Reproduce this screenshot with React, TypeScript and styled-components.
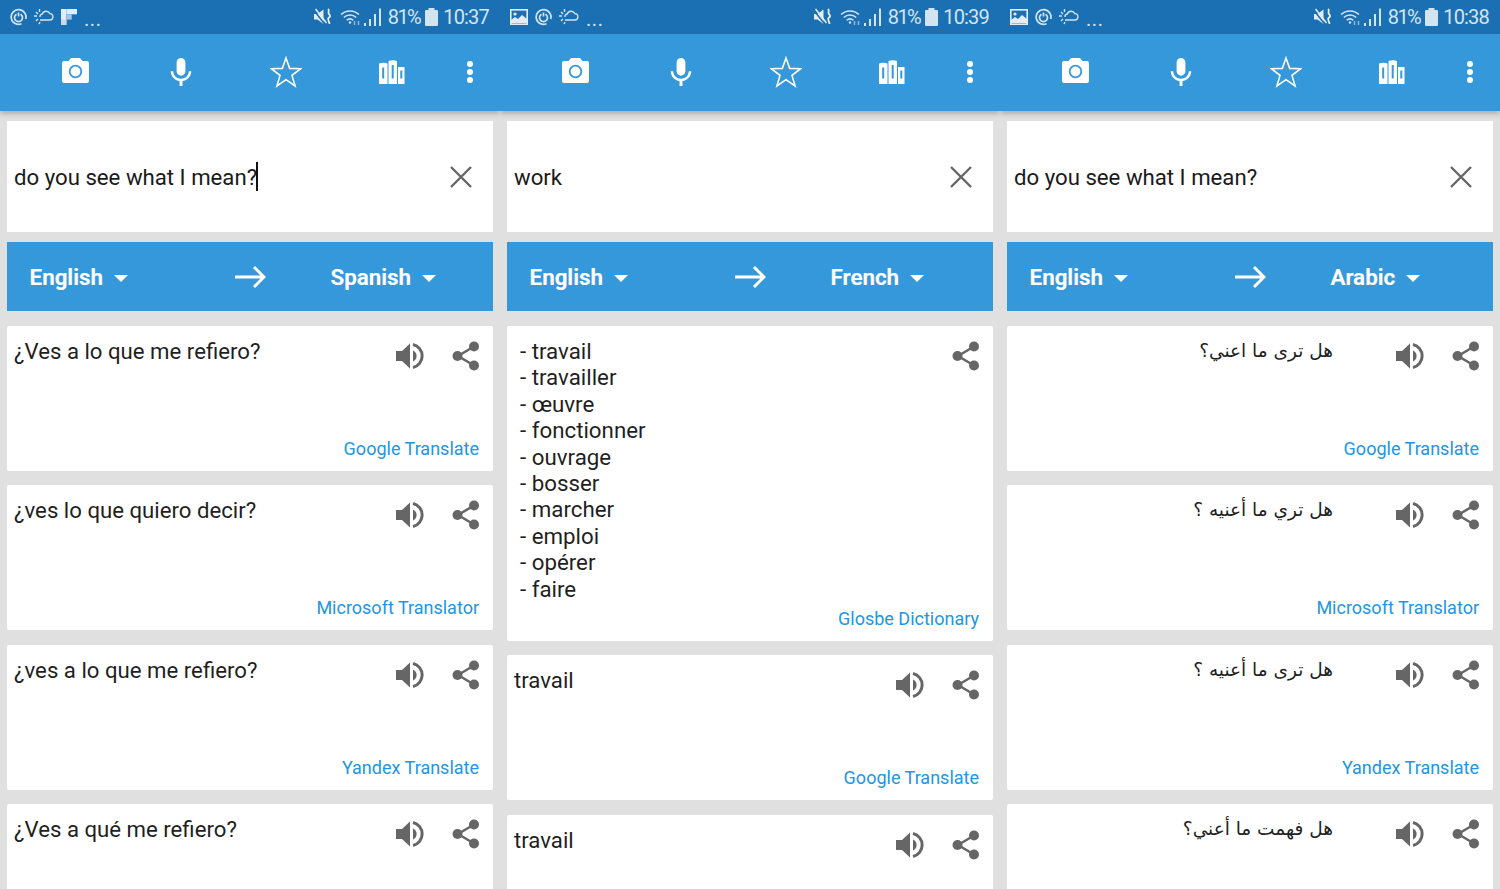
import React from 'react'
import styled, { createGlobalStyle } from 'styled-components'

const GlobalStyle = createGlobalStyle`
  html, body {
    margin: 0;
    padding: 0;
    background: #e0e0e0;
  }
  body {
    font-family: Roboto, "Liberation Sans", sans-serif;
  }
`

const Page = styled.div`
  display: grid;
  grid-template-columns: repeat(3, 500px);
  width: 1500px;
  height: 889px;
  overflow: hidden;
`

const Phone = styled.div`
  display: flex;
  flex-direction: column;
  min-width: 0;
  overflow: hidden;
`

const StatusBar = styled.div`
  display: flex;
  align-items: center;
  justify-content: space-between;
  height: 34px;
  flex: none;
  padding: 0 11px 0 10px;
  background: #1b70b3;
  color: #d3e4f1;
  font-size: 20px;
`

const StatusGroup = styled.div`
  display: flex;
  align-items: center;
  gap: 5px;
`

const LeftGroup = styled(StatusGroup)`
  gap: 7px;
`

const Dots = styled.span`
  font-size: 20px;
  letter-spacing: 0.6px;
  margin-top: 4px;
`

const Percent = styled.span`
  margin-left: 2px;
  letter-spacing: -1.6px;
`

const Clock = styled.span`
  letter-spacing: -0.8px;
`

const Toolbar = styled.div`
  display: flex;
  align-items: center;
  height: 77px;
  flex: none;
  padding-left: 22.5px;
  background: #3498db;
  box-shadow: 0 3px 5px rgba(0, 0, 0, 0.22);
  position: relative;
  z-index: 1;
`

const ToolSlot = styled.div<{ $narrow?: boolean }>`
  display: flex;
  align-items: center;
  justify-content: center;
  width: ${(p) => (p.$narrow ? '50px' : '105.5px')};
  margin-top: -1px;
`

const Content = styled.div`
  display: flex;
  flex-direction: column;
  padding: 10px 7px 0;
`

const InputCard = styled.div`
  display: flex;
  align-items: center;
  justify-content: space-between;
  height: 111px;
  padding: 0 21px 0 7px;
  background: #fff;
`

const InputText = styled.div`
  font-size: 22.2px;
  color: #1a1a1a;
  display: flex;
  align-items: center;
  padding-top: 1px;
`

const Caret = styled.span`
  display: block;
  width: 2px;
  height: 29px;
  margin: -2px 0 0 -1px;
  background: #111;
`

const LangBar = styled.div`
  display: grid;
  grid-template-columns: 228px 95.5px 1fr;
  align-items: center;
  height: 69px;
  margin-top: 10px;
  margin-bottom: 15px;
  background: #3498db;
  color: #fff;
`

const Lang = styled.div<{ $first?: boolean }>`
  display: flex;
  align-items: center;
  gap: 11px;
  padding-left: ${(p) => (p.$first ? '22.5px' : '0')};
  font-size: 22.4px;
  font-weight: 600;
  -webkit-text-stroke: 0.2px #fff;
`

const DownCaret = styled.span`
  display: block;
  width: 0;
  height: 0;
  margin-top: 3px;
  border-left: 7px solid transparent;
  border-right: 7px solid transparent;
  border-top: 7px solid #fff;
`

const Results = styled.div`
  display: flex;
  flex-direction: column;
  gap: 14.33px;
`

const Card = styled.div<{ $tall?: boolean }>`
  display: flex;
  flex-direction: column;
  flex: none;
  height: ${(p) => (p.$tall ? '315px' : '145px')};
  padding: 12px 13px 0 7px;
  box-sizing: border-box;
  background: #fff;
  border-radius: 2px;
`

const CardRow = styled.div`
  display: flex;
  align-items: flex-start;
  justify-content: space-between;
`

const Translation = styled.div<{ $rtl?: boolean }>`
  flex: 1;
  min-width: 0;
  font-size: 22.2px;
  line-height: 26.4px;
  color: #1f1f1f;
  ${(p) =>
    p.$rtl
      ? `
    direction: rtl;
    padding-right: 63px;
    font-family: "DejaVu Sans", sans-serif;
    font-size: 18.5px;
  `
      : ''}
`

const WordList = styled.div`
  flex: 1;
  padding-left: 6px;
  font-size: 22.3px;
  line-height: 26.4px;
  color: #1f1f1f;
`

const Actions = styled.div`
  display: flex;
  align-items: center;
  justify-content: flex-end;
  gap: 26px;
  flex: none;
  margin-top: 3px;
`

const Source = styled.div`
  margin-top: auto;
  padding: 0 1px 10px 0;
  text-align: right;
  font-size: 18px;
  line-height: 24px;
  color: #2196e3;
`

const RingIcon = () => (
  <svg width="17" height="18" viewBox="0 0 17 18" fill="none" stroke="#d3e4f1" strokeWidth="1.700">
    <path d="M11.500 15.800A7.400 7.400 0 1 1 15.700 11" />
    <path d="M6.500 6.200a4 4 0 1 0 4 0" />
    <path d="M8.500 4.500v4" />
  </svg>
)

const CloudIcon = () => (
  <svg width="20" height="16" viewBox="0 0 20 16" fill="none" stroke="#d3e4f1" strokeWidth="1.400">
    <path d="M6 11h9.500a3.200 3.200 0 0 0 .4-6.400A4.200 4.200 0 0 0 8.200 5a2.600 2.600 0 0 0-2.200 3" />
    <path d="M0 7h3M2 3l2 2M5.500 0v3M2 12l2-2M5 15l1-2" />
  </svg>
)

const FlipIcon = () => (
  <svg width="16" height="16" viewBox="0 0 16 16">
    <rect x="0" y="0" width="5.400" height="16" fill="#e4edf5" />
    <rect x="5.400" y="0" width="10.600" height="5.300" fill="#e4edf5" />
    <rect x="5.400" y="5.300" width="5.300" height="5.300" fill="#a9c8e0" />
    <rect x="0" y="10.600" width="5.400" height="5.400" fill="#c5d9ea" />
  </svg>
)

const PictureIcon = () => (
  <svg width="18" height="16" viewBox="0 0 18 16">
    <rect x="0.800" y="0.800" width="16.400" height="14.400" fill="none" stroke="#e4edf5" strokeWidth="1.600" />
    <path d="M1 14V11l4-3 3 2 4-4 5 4v4z" fill="#e4edf5" />
    <circle cx="5" cy="5" r="1.600" fill="#e4edf5" />
  </svg>
)

const MuteIcon = () => (
  <svg width="18" height="18" viewBox="0 0 18 18" fill="#e4edf5">
    <path d="M0 6h3.500L9.500 1.500V16L3.500 11.500H0z" />
    <path d="M0 2.500l11 14" stroke="#1b70b3" strokeWidth="1.500" />
    <path d="M1.500 1l11 14" stroke="#e4edf5" strokeWidth="1.500" />
    <path d="M14 1c2.500 2-1 3 1 5s1 3-.5 4 1 3 1 6" fill="none" stroke="#e4edf5" strokeWidth="1.800" />
  </svg>
)

const WifiIcon = () => (
  <svg
    width="21"
    height="18"
    viewBox="0 0 21 18"
    fill="none"
    stroke="#d3e4f1"
    strokeWidth="1.500"
    style={{ margin: '0 -2px 0 3px' }}
  >
    <path d="M1 6.500a13 13 0 0 1 18 0" />
    <path d="M3.800 9.500a9 9 0 0 1 12.400 0" />
    <path d="M6.700 12.300a5 5 0 0 1 6.600 0" />
    <circle cx="10" cy="14.500" r="1.200" fill="#d3e4f1" stroke="none" />
    <path d="M14.500 17v-4M18.500 13v4" stroke="#8fb6d6" />
  </svg>
)

const SignalIcon = () => (
  <svg width="17" height="19" viewBox="0 0 17 19" fill="#d3e4f1">
    <rect x="0" y="15" width="2" height="3" />
    <rect x="5" y="11" width="2" height="7" />
    <rect x="10" y="6" width="2" height="12" />
    <rect x="15" y="0.500" width="2" height="17.500" />
  </svg>
)

const BatteryIcon = () => (
  <svg width="13" height="19" viewBox="0 0 13 19" fill="#d3e4f1">
    <rect x="3.500" y="0" width="6" height="2.500" />
    <rect x="0" y="2" width="13" height="16" rx="1" />
  </svg>
)

const CameraIcon = () => (
  <svg width="27" height="28" viewBox="0 0 27 28">
    <path
      fill="#fff"
      d="M9 0L6.500 3H2C.9 3 0 3.900 0 5v18c0 1.100.9 2 2 2h23c1.100 0 2-.9 2-2V5c0-1.100-.9-2-2-2h-4.500L18 0z"
    />
    <circle cx="13.500" cy="13.500" r="5.800" fill="none" stroke="#3498db" strokeWidth="1.800" />
  </svg>
)

const MicIcon = () => (
  <svg width="22" height="30" viewBox="4.500 1.500 15 20" fill="#fff">
    <path d="M12 14c1.660 0 2.990-1.340 2.990-3L15 5c0-1.660-1.340-3-3-3S9 3.340 9 5v6c0 1.660 1.340 3 3 3zm5.300-3c0 3-2.540 5.100-5.300 5.100S6.700 14 6.700 11H5c0 3.410 2.720 6.230 6 6.720V21h2v-3.280c3.280-.48 6-3.300 6-6.720h-1.700z" />
  </svg>
)

const StarIcon = () => (
  <svg width="32" height="33" viewBox="0 0 32 33" fill="none" stroke="#fff" strokeWidth="1.600" strokeLinejoin="miter">
    <path d="M16 2l3.700 10.400 11 .3-8.700 6.700 3.100 10.600-9.100-6.300-9.100 6.300 3.100-10.600-8.700-6.700 11-.3z" />
  </svg>
)

const BooksIcon = () => (
  <svg width="26" height="24" viewBox="0 0 26 24" fill="#fff">
    <path
      fillRule="evenodd"
      d="M0 3.500Q4 2 8.500 3.500V24H0zM3.200 7.500v11h2v-11zM9.500 1Q14 -.5 18 1V24H9.500zM12.700 5v13.500h2V5zM19 7h6.500V24H19zM21.300 10.500v8h2v-8z"
    />
  </svg>
)

const MoreIcon = () => (
  <svg width="8" height="24" viewBox="0 0 8 24" fill="#fff">
    <circle cx="4" cy="4" r="3" />
    <circle cx="4" cy="12" r="3" />
    <circle cx="4" cy="20" r="3" />
  </svg>
)

const CloseIcon = () => (
  <svg width="22" height="22" viewBox="0 0 22 22" stroke="#666" strokeWidth="2.400">
    <path d="M1 1l20 20M21 1L1 21" />
  </svg>
)

const ArrowIcon = () => (
  <svg width="31" height="24" viewBox="0 0 31 24" fill="none" stroke="#fff" strokeWidth="3">
    <path d="M0 12h29M19 2l10 10-10 10" />
  </svg>
)

const SpeakerIcon = () => (
  <svg width="30" height="30" viewBox="0 0 30 30">
    <path d="M0 10h6l8-7.500v25L6 20H0z" fill="#666" />
    <path d="M17 9.500a6 6 0 0 1 0 11z" fill="#666" />
    <path d="M17 3.500a11.800 11.800 0 0 1 0 23" fill="none" stroke="#666" strokeWidth="3" />
  </svg>
)

const ShareIcon = () => (
  <svg width="28" height="30" viewBox="0 0 28 30" fill="#666">
    <path d="M6 15L22 5.500M6 15l16 9.500" stroke="#666" strokeWidth="2.600" />
    <circle cx="5.500" cy="15" r="5" />
    <circle cx="22" cy="5.500" r="5" />
    <circle cx="22" cy="24.500" r="5" />
  </svg>
)

const ResultCard = ({
  text,
  source,
  rtl,
}: {
  text: string
  source: string
  rtl?: boolean
}) => (
  <Card>
    <CardRow>
      <Translation $rtl={rtl}>{text}</Translation>
      <Actions>
        <SpeakerIcon />
        <ShareIcon />
      </Actions>
    </CardRow>
    <Source>{source}</Source>
  </Card>
)

const PhoneChrome = ({
  time,
  first,
  children,
}: {
  time: string
  first: boolean
  children: React.ReactNode
}) => (
  <Phone>
    <StatusBar>
      <LeftGroup>
        {first ? <RingIcon /> : <PictureIcon />}
        {first ? <CloudIcon /> : <RingIcon />}
        {first ? <FlipIcon /> : <CloudIcon />}
        <Dots>...</Dots>
      </LeftGroup>
      <StatusGroup>
        <MuteIcon />
        <WifiIcon />
        <SignalIcon />
        <Percent>81%</Percent>
        <BatteryIcon />
        <Clock>{time}</Clock>
      </StatusGroup>
    </StatusBar>
    <Toolbar>
      <ToolSlot>
        <CameraIcon />
      </ToolSlot>
      <ToolSlot>
        <MicIcon />
      </ToolSlot>
      <ToolSlot>
        <StarIcon />
      </ToolSlot>
      <ToolSlot>
        <BooksIcon />
      </ToolSlot>
      <ToolSlot $narrow>
        <MoreIcon />
      </ToolSlot>
    </Toolbar>
    {children}
  </Phone>
)

const Header = ({
  input,
  target,
  caret,
}: {
  input: string
  target: string
  caret?: boolean
}) => (
  <>
    <InputCard>
      <InputText>
        {input}
        {caret && <Caret />}
      </InputText>
      <CloseIcon />
    </InputCard>
    <LangBar>
      <Lang $first>
        English
        <DownCaret />
      </Lang>
      <ArrowIcon />
      <Lang>
        {target}
        <DownCaret />
      </Lang>
    </LangBar>
  </>
)

const frenchWords = [
  'travail',
  'travailler',
  'œuvre',
  'fonctionner',
  'ouvrage',
  'bosser',
  'marcher',
  'emploi',
  'opérer',
  'faire',
]

const App = () => (
  <Page>
    <GlobalStyle />
    <PhoneChrome time="10:37" first>
      <Content>
        <Header input="do you see what I mean?" target="Spanish" caret />
        <Results>
          <ResultCard text="¿Ves a lo que me refiero?" source="Google Translate" />
          <ResultCard text="¿ves lo que quiero decir?" source="Microsoft Translator" />
          <ResultCard text="¿ves a lo que me refiero?" source="Yandex Translate" />
          <ResultCard text="¿Ves a qué me refiero?" source="" />
        </Results>
      </Content>
    </PhoneChrome>

    <PhoneChrome time="10:39" first={false}>
      <Content>
        <Header input="work" target="French" />
        <Results>
          <Card $tall>
            <CardRow>
              <WordList>
                {frenchWords.map((word) => (
                  <div key={word}>- {word}</div>
                ))}
              </WordList>
              <Actions>
                <ShareIcon />
              </Actions>
            </CardRow>
            <Source>Glosbe Dictionary</Source>
          </Card>
          <ResultCard text="travail" source="Google Translate" />
          <ResultCard text="travail" source="" />
        </Results>
      </Content>
    </PhoneChrome>

    <PhoneChrome time="10:38" first={false}>
      <Content>
        <Header input="do you see what I mean?" target="Arabic" />
        <Results>
          <ResultCard rtl text="هل ترى ما اعني؟" source="Google Translate" />
          <ResultCard rtl text="هل تري ما أعنيه ؟" source="Microsoft Translator" />
          <ResultCard rtl text="هل ترى ما أعنيه ؟" source="Yandex Translate" />
          <ResultCard rtl text="هل فهمت ما أعني؟" source="" />
        </Results>
      </Content>
    </PhoneChrome>
  </Page>
)

export default App
